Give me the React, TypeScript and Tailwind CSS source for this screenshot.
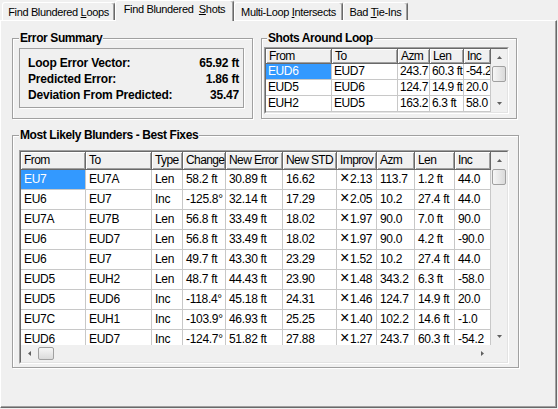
import clsx from 'clsx';

const tabs = [
  { pre: 'Find Blundered ', u: 'L', post: 'oops', w: 'w-[113px]', active: false },
  { pre: 'Find Blundered\u00a0 ', u: 'S', post: 'hots', w: 'w-[119px]', active: true },
  { pre: 'Multi-Loop ', u: 'I', post: 'ntersects', w: 'w-[109px]', active: false },
  { pre: 'Bad ', u: 'T', post: 'ie-Ins', w: 'w-[65px]', active: false },
];

const summary = [
  ['Loop Error Vector:', '65.92 ft'],
  ['Predicted Error:', '1.86 ft'],
  ['Deviation From Predicted:', '35.47'],
];

const shotCols = [
  { label: 'From', w: 'w-[66px]' },
  { label: 'To', w: 'w-[66px]' },
  { label: 'Azm', w: 'w-[32px]' },
  { label: 'Len', w: 'w-[34px]' },
  { label: 'Inc', w: 'w-[27px]' },
];

const shots = [
  ['EUD6', 'EUD7', '243.7', '60.3 ft', '-54.2'],
  ['EUD5', 'EUD6', '124.7', '14.9 ft', '20.0'],
  ['EUH2', 'EUD5', '163.2', '6.3 ft', '58.0'],
];

const blunderCols = [
  { label: 'From', w: 'w-[65px]' },
  { label: 'To', w: 'w-[66px]' },
  { label: 'Type', w: 'w-[31px]' },
  { label: 'Change', w: 'w-[43px]' },
  { label: 'New Error', w: 'w-[57px]' },
  { label: 'New STD', w: 'w-[54px]' },
  { label: 'Improv', w: 'w-[40px]' },
  { label: 'Azm', w: 'w-[38px]' },
  { label: 'Len', w: 'w-[40px]' },
  { label: 'Inc', w: 'w-[36px]' },
];

const blunders = [
  ['EU7', 'EU7A', 'Len', '58.2 ft', '30.89 ft', '16.62', '2.13', '113.7', '1.2 ft', '44.0'],
  ['EU6', 'EU7', 'Inc', '-125.8°', '32.14 ft', '17.29', '2.05', '10.2', '27.4 ft', '44.0'],
  ['EU7A', 'EU7B', 'Len', '56.8 ft', '33.49 ft', '18.02', '1.97', '90.0', '7.0 ft', '90.0'],
  ['EU6', 'EUD7', 'Len', '56.8 ft', '33.49 ft', '18.02', '1.97', '90.0', '4.2 ft', '-90.0'],
  ['EU6', 'EU7', 'Len', '49.7 ft', '43.30 ft', '23.29', '1.52', '10.2', '27.4 ft', '44.0'],
  ['EUD5', 'EUH2', 'Len', '48.7 ft', '44.43 ft', '23.90', '1.48', '343.2', '6.3 ft', '-58.0'],
  ['EUD5', 'EUD6', 'Inc', '-118.4°', '45.18 ft', '24.31', '1.46', '124.7', '14.9 ft', '20.0'],
  ['EU7C', 'EUH1', 'Inc', '-103.9°', '46.93 ft', '25.25', '1.40', '102.2', '14.6 ft', '-1.0'],
  ['EUD6', 'EUD7', 'Inc', '-124.7°', '51.82 ft', '27.88', '1.27', '243.7', '60.3 ft', '-54.2'],
];

function Arrow({ dir }: { dir: 'up' | 'down' | 'left' | 'right' }) {
  if (dir === 'up' || dir === 'down') {
    return (
      <svg width="5" height="3" viewBox="0 0 5 3">
        <path d={dir === 'up' ? 'M0 3L2.5 0L5 3Z' : 'M0 0L5 0L2.5 3Z'} fill="#606060" />
      </svg>
    );
  }
  return (
    <svg width="3" height="5" viewBox="0 0 3 5">
      <path d={dir === 'left' ? 'M3 0L3 5L0 2.5Z' : 'M0 0L0 5L3 2.5Z'} fill="#606060" />
    </svg>
  );
}

function VScroll({ btn, thumb }: { btn: string; thumb: string }) {
  return (
    <div className="w-[16px] flex flex-col bg-[#f0f0f0]">
      <div className={clsx('flex items-center justify-center', btn)}>
        <Arrow dir="up" />
      </div>
      <div
        className={clsx(
          'mx-[1px] rounded-[2px] border border-[#a0a0a0] bg-gradient-to-r from-[#f6f6f6] to-[#dadada]',
          thumb
        )}
      />
      <div className="flex-1" />
      <div className={clsx('flex items-center justify-center', btn)}>
        <Arrow dir="down" />
      </div>
    </div>
  );
}

function HeaderCell({ label, w, h }: { label: string; w: string; h: string }) {
  return (
    <div
      className={clsx(
        'shrink-0 pl-[3px] border-r border-b border-[#696969] shadow-[inset_1px_1px_0_#fff,inset_-1px_-1px_0_#a0a0a0] whitespace-nowrap overflow-hidden tracking-[-0.6px]',
        w,
        h
      )}
    >
      {label}
    </div>
  );
}

function Sunken({ className, children }: { className?: string; children: React.ReactNode }) {
  return (
    <div className={clsx('border border-[#a0a0a0] border-r-white border-b-white', className)}>
      <div className="h-full border border-[#696969] border-r-[#e3e3e3] border-b-[#e3e3e3] bg-white overflow-hidden">
        {children}
      </div>
    </div>
  );
}

export default function App() {
  return (
    <div className="w-[558px] h-[409px] bg-[#f0f0f0] font-['Liberation_Sans',Arial,sans-serif] text-black overflow-hidden">
      {/* Tabs */}
      <div className="flex items-end h-[20px] pl-[2px]">
        {tabs.map((t) => (
          <div
            key={t.u}
            className={clsx(
              'flex justify-center text-[11px] leading-[13px] tracking-[-0.35px] whitespace-nowrap border-t border-l border-r border-t-white border-l-white border-r-[#696969] rounded-t-[3px] shadow-[inset_-1px_0_0_#a0a0a0]',
              t.active ? 'relative z-10 h-[21px] -mb-[1px] pt-[2px] bg-[#f0f0f0]' : 'h-[18px] pt-[3px]',
              t.w
            )}
          >
            <span>
              {t.pre}
              <span className="underline underline-offset-1">{t.u}</span>
              {t.post}
            </span>
          </div>
        ))}
      </div>

      {/* Panel */}
      <div className="w-[557px] h-[388px] border border-t-white border-l-white border-r-[#696969] border-b-[#696969] shadow-[inset_-1px_-1px_0_#a0a0a0] pl-[11px] pt-[10px]">
        <div className="flex gap-[8px]">
          {/* Error Summary */}
          <fieldset className="w-[241px] border border-[#a0a0a0] shadow-[inset_1px_1px_0_#fff,1px_1px_0_#fff] pl-[6px] pb-[10px]">
            <legend className="px-[1px] text-[12px] leading-[15px] font-bold tracking-[-0.4px] bg-[#f0f0f0]">
              Error Summary
            </legend>
            <div className="mt-[2px] w-[225px] border border-[#a0a0a0] shadow-[1px_1px_0_#fff] pt-[6px] pb-[4px] pl-[8px] pr-[4px] text-[12px] leading-[16px] font-bold tracking-[-0.2px]">
              {summary.map(([k, v]) => (
                <div key={k} className="flex justify-between">
                  <span>{k}</span>
                  <span>{v}</span>
                </div>
              ))}
            </div>
          </fieldset>

          {/* Shots Around Loop */}
          <fieldset className="w-[256px] border border-[#a0a0a0] shadow-[inset_1px_1px_0_#fff,1px_1px_0_#fff] pl-[2px] pb-[4px]">
            <legend className="ml-[3px] px-[1px] text-[12px] leading-[15px] font-bold tracking-[-0.4px] bg-[#f0f0f0]">
              Shots Around Loop
            </legend>
            <Sunken className="mt-[1px] w-[245px] h-[67px]">
              <div className="flex text-[12px] tracking-[-0.4px]">
                <div className="flex flex-col">
                  <div className="flex bg-[#f0f0f0] leading-[14px]">
                    {shotCols.map((c) => (
                      <HeaderCell key={c.label} label={c.label} w={c.w} h="h-[15px]" />
                    ))}
                  </div>
                  {shots.map((r, i) => (
                    <div key={i} className="flex leading-[15px]">
                      {r.map((v, j) => (
                        <div
                          key={j}
                          className={clsx(
                            'shrink-0 h-[16px] pl-[2px] border-r border-b border-[#c8c8c8] whitespace-nowrap overflow-hidden',
                            shotCols[j].w,
                            i === 0 && j === 0 && 'bg-[#3399ff] text-white'
                          )}
                        >
                          {v}
                        </div>
                      ))}
                    </div>
                  ))}
                </div>
                <VScroll btn="h-[17px]" thumb="h-[16px]" />
              </div>
            </Sunken>
          </fieldset>
        </div>

        {/* Most Likely Blunders */}
        <fieldset className="mt-[9px] w-[507px] border border-[#a0a0a0] shadow-[inset_1px_1px_0_#fff,1px_1px_0_#fff] pl-[6px] pb-[3px]">
          <legend className="px-[1px] text-[12px] leading-[15px] font-bold tracking-[-0.4px] bg-[#f0f0f0]">
            Most Likely Blunders - Best Fixes
          </legend>
          <Sunken className="mt-[7px] w-[490px] h-[214px]">
            <div className="flex flex-col h-full text-[12px] tracking-[-0.3px]">
              <div className="flex h-[193px]">
                <div className="flex flex-col w-[470px]">
                  <div className="flex bg-[#f0f0f0] leading-[17px]">
                    {blunderCols.map((c) => (
                      <HeaderCell key={c.label} label={c.label} w={c.w} h="h-[18px]" />
                    ))}
                  </div>
                  <div className="flex-1 overflow-hidden">
                    {blunders.map((r, i) => (
                      <div key={i} className="flex leading-[19px]">
                        {r.map((v, j) => (
                          <div
                            key={j}
                            className={clsx(
                              'shrink-0 h-[20px] pl-[3px] border-r border-b border-[#c8c8c8] whitespace-nowrap overflow-hidden',
                              blunderCols[j].w,
                              i === 0 && j === 0 && 'bg-[#3399ff] text-white'
                            )}
                          >
                            {j === 6 ? (
                              <>
                                <span className="mr-[1px] text-[16px] leading-[16px] font-light">×</span>
                                {v}
                              </>
                            ) : (
                              v
                            )}
                          </div>
                        ))}
                      </div>
                    ))}
                  </div>
                </div>
                <VScroll btn="h-[17px]" thumb="h-[16px]" />
              </div>
              {/* horizontal scrollbar */}
              <div className="flex h-[17px] bg-[#f0f0f0]">
                <div className="w-[470px] flex items-center">
                  <div className="w-[17px] flex justify-center">
                    <Arrow dir="left" />
                  </div>
                  <div className="w-[16px] h-[13px] rounded-[2px] border border-[#a0a0a0] bg-gradient-to-b from-[#f6f6f6] to-[#dadada]" />
                  <div className="flex-1" />
                  <div className="w-[17px] flex justify-center">
                    <Arrow dir="right" />
                  </div>
                </div>
                <div className="w-[16px]" />
              </div>
            </div>
          </Sunken>
        </fieldset>
      </div>
    </div>
  );
}
